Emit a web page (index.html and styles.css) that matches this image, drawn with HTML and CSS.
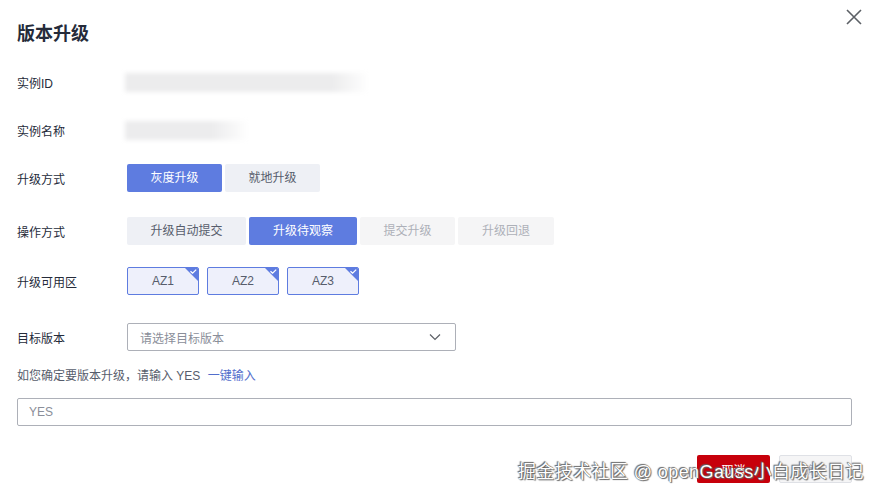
FILE: index.html
```html
<!DOCTYPE html>
<html lang="zh-CN">
<head>
    <meta charset="UTF-8">
    <title>版本升级</title>
    <link rel="stylesheet" href="styles.css">
</head>
<body>
<div class="dialog">
    <div class="head">
        <h1>版本升级</h1>
        <svg class="close" width="16" height="16" viewBox="0 0 16 16"><path d="M1 1L15 15M15 1L1 15" stroke="#5c6066" stroke-width="1.6" fill="none"/></svg>
    </div>

    <div class="row r1">
        <div class="label">实例ID</div>
        <div class="blur long"></div>
    </div>
    <div class="row r2">
        <div class="label">实例名称</div>
        <div class="blur short"></div>
    </div>
    <div class="row r3">
        <div class="label">升级方式</div>
        <div class="group">
            <span class="opt on w95">灰度升级</span>
            <span class="opt w95">就地升级</span>
        </div>
    </div>
    <div class="row r4">
        <div class="label">操作方式</div>
        <div class="group">
            <span class="opt w119">升级自动提交</span>
            <span class="opt on w110">升级待观察</span>
            <span class="opt off w95">提交升级</span>
            <span class="opt off w96">升级回退</span>
        </div>
    </div>
    <div class="row r5">
        <div class="label">升级可用区</div>
        <div class="azs">
            <span class="az">AZ1<svg class="tick" width="13" height="13" viewBox="0 0 13 13"><path d="M0 0H13V13Z" fill="#5e7ce0"/><path d="M5.5 3.2L7.6 5.2L11.2 1.6" stroke="#fff" stroke-width="1.3" fill="none"/></svg></span>
            <span class="az">AZ2<svg class="tick" width="13" height="13" viewBox="0 0 13 13"><path d="M0 0H13V13Z" fill="#5e7ce0"/><path d="M5.5 3.2L7.6 5.2L11.2 1.6" stroke="#fff" stroke-width="1.3" fill="none"/></svg></span>
            <span class="az">AZ3<svg class="tick" width="13" height="13" viewBox="0 0 13 13"><path d="M0 0H13V13Z" fill="#5e7ce0"/><path d="M5.5 3.2L7.6 5.2L11.2 1.6" stroke="#fff" stroke-width="1.3" fill="none"/></svg></span>
        </div>
    </div>
    <div class="row r6">
        <div class="label">目标版本</div>
        <div class="select">
            <span>请选择目标版本</span>
            <svg width="12" height="8" viewBox="0 0 12 8"><path d="M1 1.5L6 6.5L11 1.5" stroke="#5c6066" stroke-width="1.2" fill="none"/></svg>
        </div>
    </div>

    <p class="confirm">如您确定要版本升级，请输入 YES <a>一键输入</a></p>
    <div class="input">YES</div>

    <div class="footer">
        <button class="cancel">取消</button>
        <button class="ok">确定</button>
    </div>

    <div class="watermark">掘金技术社区 @ openGauss小白成长日记</div>
</div>
</body>
</html>
```

FILE: styles.css
```css
body {
    margin: 0;
    background: #fff;
    font-family: "Liberation Sans", "Noto Sans CJK SC", sans-serif;
    color: #252b3a;
    font-size: 12px;
}
.dialog {
    position: relative;
    width: 875px;
    height: 498px;
    padding: 0 23px 0 17px;
    box-sizing: border-box;
}
.head {
    display: flex;
    justify-content: space-between;
    align-items: center;
    height: 64px;
}
.head h1 {
    margin: 0;
    font-size: 18px;
    font-weight: bold;
    color: #252b3a;
}
.close {
    margin-top: -30px;
    margin-right: -10px;
}
.row {
    display: flex;
    align-items: center;
    height: 28px;
}
.r1 { margin-top: 4px; }
.r2 { margin-top: 20px; }
.r3 { margin-top: 20px; }
.r4 { margin-top: 25px; }
.r5 { margin-top: 22px; }
.r6 { margin-top: 28px; }
.label {
    width: 110px;
    flex-shrink: 0;
}
.blur {
    height: 19px;
    margin-left: -2px;
    filter: blur(2px);
}
.long {
    width: 244px;
    background: linear-gradient(to right, #ececed 85%, #fff);
}
.short {
    width: 124px;
    background: linear-gradient(to right, #ececed 70%, #fff);
}
.group {
    display: flex;
    gap: 3px;
}
.opt {
    height: 28px;
    line-height: 28px;
    text-align: center;
    background: #eef0f5;
    color: #575d6c;
    border-radius: 2px;
}
.opt.on {
    background: #5e7ce0;
    color: #fff;
}
.opt.off {
    background: #f5f5f6;
    color: #adb0b8;
}
.w95 { width: 95px; }
.w96 { width: 96px; }
.w110 { width: 108px; }
.w119 { width: 119px; }
.azs {
    display: flex;
    gap: 8px;
}
.az {
    position: relative;
    width: 70px;
    height: 26px;
    line-height: 26px;
    text-align: center;
    border: 1px solid #5e7ce0;
    background: #eef0fb;
    color: #575d6c;
    border-radius: 2px;
    overflow: hidden;
}
.tick {
    position: absolute;
    top: 0;
    right: 0;
}
.select {
    display: flex;
    justify-content: space-between;
    align-items: center;
    width: 329px;
    height: 28px;
    box-sizing: border-box;
    border: 1px solid #adb0b8;
    border-radius: 2px;
    padding: 0 14px 0 12px;
    color: #8a8e99;
}
.confirm {
    margin: 13px 0 0;
    line-height: 24px;
    color: #575d6c;
}
.confirm a {
    color: #526ecc;
    margin-left: 4px;
}
.input {
    margin-top: 10px;
    width: 835px;
    height: 28px;
    box-sizing: border-box;
    border: 1px solid #adb0b8;
    border-radius: 2px;
    padding: 0 11px;
    line-height: 26px;
    color: #8a8e99;
}
.footer {
    display: flex;
    justify-content: flex-end;
    gap: 9px;
    margin-top: 29px;
    width: 835px;
}
.footer button {
    width: 73px;
    height: 28px;
    border-radius: 2px;
    font-family: inherit;
    font-size: 12px;
}
.cancel {
    background: #c7000b;
    border: none;
    color: #fff;
}
.ok {
    background: #f5f5f6;
    border: 1px solid #dfe1e6;
    color: #adb0b8;
}
.watermark {
    position: absolute;
    left: 518px;
    top: 457px;
    font-size: 18px;
    letter-spacing: 0.4px;
    color: #fff;
    white-space: nowrap;
    text-shadow: 0 0 1px #555, 1px 1px 1px #666, -1px -1px 1px #666;
}
```
